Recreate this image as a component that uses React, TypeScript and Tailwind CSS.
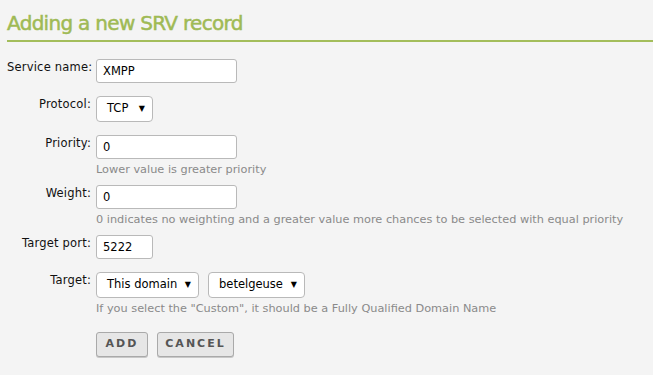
function Arrow() {
  return <span className="text-[8px] leading-none text-black">▼</span>;
}

function Select({ value, width }: { value: string; width: string }) {
  return (
    <div
      className={`${width} h-[26px] flex items-center justify-between pl-[10px] pr-[7px] bg-white border border-[#b9b9b9] rounded-[4px] text-[11.5px] text-black`}
    >
      <span>{value}</span>
      <Arrow />
    </div>
  );
}

function TextInput({ value, width }: { value: string; width: string }) {
  return (
    <div
      className={`${width} h-[24px] flex items-center px-[6px] pt-[2px] bg-white border border-[#b9b9b9] rounded-[3px] text-[11.5px] text-black`}
    >
      {value}
    </div>
  );
}

function Row({
  label,
  children,
  hint,
  className = "",
}: {
  label: string;
  children: React.ReactNode;
  hint?: string;
  className?: string;
}) {
  return (
    <div className={`flex items-start ${className}`}>
      <div className="w-[84px] shrink-0 whitespace-nowrap text-right text-[11.5px] tracking-[0.2px] leading-[14px] pt-[1px] text-[#111]">
        {label}
      </div>
      <div className="pl-[5px]">
        {children}
        {hint && <div className="mt-[4px] text-[11.3px] leading-[14px] text-[#8a8a8a]">{hint}</div>}
      </div>
    </div>
  );
}

export default function App() {
  return (
    <div className="min-h-screen h-[375px] bg-[#f4f4f4] pl-[7px] overflow-hidden" style={{ fontFamily: '"DejaVu Sans", Verdana, sans-serif' }}>
      <h1 className="pt-[13px] pb-[7px] text-[20px] leading-[20px] tracking-[-0.7px] text-[#9fba55] [-webkit-text-stroke:0.5px_#9fba55] border-b-2 border-[#a3bd5b]">
        Adding a new SRV record
      </h1>

      <div className="pt-[17px]">
        <Row label="Service name:" className="mb-[13px]">
          <TextInput value="XMPP" width="w-[141px]" />
        </Row>
        <Row label="Protocol:" className="mb-[13px]">
          <Select value="TCP" width="w-[57px]" />
        </Row>
        <Row label="Priority:" hint="Lower value is greater priority" className="mb-[8px]">
          <TextInput value="0" width="w-[141px]" />
        </Row>
        <Row
          label="Weight:"
          hint="0 indicates no weighting and a greater value more chances to be selected with equal priority"
          className="mb-[8px]"
        >
          <TextInput value="0" width="w-[141px]" />
        </Row>
        <Row label="Target port:" className="mb-[13px]">
          <TextInput value="5222" width="w-[57px]" />
        </Row>
        <Row
          label="Target:"
          hint={'If you select the "Custom", it should be a Fully Qualified Domain Name'}
          className="mb-[16px]"
        >
          <div className="flex gap-[9px]">
            <Select value="This domain" width="w-[103px]" />
            <Select value="betelgeuse" width="w-[97px]" />
          </div>
        </Row>
        <div className="pl-[89px] flex gap-[9px]">
          <button className="w-[52px] h-[25px] bg-[#e6e6e6] border border-[#a9a9a9] rounded-[3px] shadow-[0_1px_0_#c8c8c8] text-[11px] font-bold tracking-[2px] text-[#555]">
            ADD
          </button>
          <button className="w-[77px] h-[25px] bg-[#e6e6e6] border border-[#a9a9a9] rounded-[3px] shadow-[0_1px_0_#c8c8c8] text-[11px] font-bold tracking-[2px] text-[#555]">
            CANCEL
          </button>
        </div>
      </div>
    </div>
  );
}
